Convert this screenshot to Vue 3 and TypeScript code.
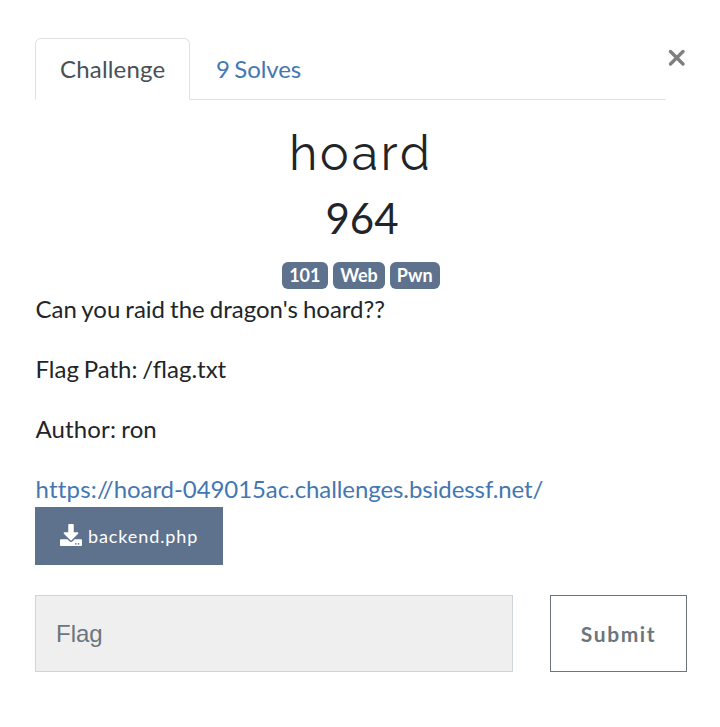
<script setup lang="ts">
import { ref } from 'vue'

const tags: string[] = ['101', 'Web', 'Pwn']
const flag = ref('')
</script>

<template>
  <main class="modal">
    <button class="close" type="button" aria-label="Close">
      <svg viewBox="0 0 18 18"><path d="M2.500 2.500L15 15M15 2.500L2.500 15" /></svg>
    </button>
    <nav class="tabs">
      <a class="tab active">Challenge</a>
      <a class="tab solves">9 Solves</a>
    </nav>
    <h2 class="name">hoard</h2>
    <h3 class="value">964</h3>
    <div class="tags"><span v-for="tag in tags" :key="tag" class="badge">{{ tag }}</span></div>
    <div class="desc">
      <p class="intro">Can you raid the dragon's hoard??</p>
      <p class="path">Flag Path: /flag.txt</p>
      <p class="author">Author: ron</p>
    </div>
    <a class="link"><span class="scheme">https://</span>hoard-049015ac.challenges.bsidessf.net/</a>
    <a class="file">
      <svg viewBox="0 0 512 512"><path d="M216 0h80c13.300 0 24 10.700 24 24v168h87.700c17.800 0 26.700 21.500 14.100 34.100L269.700 378.300c-7.500 7.500-19.800 7.500-27.300 0L90.100 226.100c-12.600-12.600-3.700-34.100 14.100-34.100H192V24c0-13.300 10.700-24 24-24zm296 376v112c0 13.300-10.700 24-24 24H24c-13.300 0-24-10.700-24-24V376c0-13.300 10.700-24 24-24h146.700l49 49c20.100 20.100 52.500 20.100 72.600 0l49-49H488c13.300 0 24 10.700 24 24zm-124 88c0-11-9-20-20-20s-20 9-20 20 9 20 20 20 20-9 20-20zm64 0c0-11-9-20-20-20s-20 9-20 20 9 20 20 20 20-9 20-20z" /></svg>
      <span>backend.php</span>
    </a>
    <form class="row" @submit.prevent>
      <input v-model="flag" class="flag" placeholder="Flag" />
      <button class="submit" type="submit">Submit</button>
    </form>
  </main>
</template>

<style>
body { background: #fff; }
</style>

<style scoped>
* { box-sizing: border-box; }
.modal { position: relative; height: 727px; padding: 38px 33px 0 35px; font: 24px/30px Lato, sans-serif; color: #212529; }
.close { position: absolute; left: 668px; top: 49px; width: 18px; height: 18px; padding: 0; border: 0; background: none; }
.close svg { display: block; width: 18px; height: 18px; fill: none; stroke: #7f7f7f; stroke-width: 3.400; stroke-linecap: round; }
.tabs { display: flex; width: 631px; height: 62px; border-bottom: 1px solid #dee2e6; }
.tab { height: 62px; padding: 15px 25px; border: 1px solid transparent; color: #4477b2; }
.active { width: 155px; padding: 15px 24px; border-color: #dee2e6 #dee2e6 #fff; border-radius: 6px 6px 0 0; color: #495057; background: #fff; letter-spacing: 0.180px; }
.solves { word-spacing: -1.500px; letter-spacing: -0.100px; }
.name { margin: 24px 0 0; height: 58px; font: 400 48px/58px Raleway, Lato, sans-serif; letter-spacing: 3px; text-align: center; }
.value { margin: 10px 0 0; padding-left: 2px; height: 52px; font-size: 42px; line-height: 52px; font-weight: 400; text-align: center; }
.tags { display: flex; justify-content: center; gap: 5px; margin-top: 18px; }
.badge { height: 27px; padding: 0 7px; border-radius: 6px; background: #5e718d; color: #fff; font-size: 18px; line-height: 27px; font-weight: 700; }
.badge:first-child { width: 46px; }
.badge:last-child { width: 50px; }
.desc { padding-top: 5px; }
.desc p { margin: 0 0 30px; padding-left: 0.500px; }
.intro { word-spacing: -1.100px; }
.path { word-spacing: -1.400px; }
.author { letter-spacing: 0.120px; word-spacing: -1px; }
.link { display: block; margin-bottom: 3px; padding-left: 0.500px; color: #4477b2; font-variant-ligatures: none; letter-spacing: -0.080px; }
.scheme { letter-spacing: 0.200px; }
.file { display: flex; align-items: center; width: 188px; height: 58px; padding-left: 25px; gap: 6px; background: #5e718d; color: #fff; font-size: 18px; letter-spacing: 0.900px; }
.file svg { width: 22px; height: 22px; margin-top: -2px; fill: currentColor; }
.row { display: flex; gap: 37px; margin: 30px 0 0; }
.flag { width: 478px; height: 77px; padding: 0 20px; border: 1px solid #ced4da; border-radius: 0; background: #efefef; font: 24px "Liberation Sans", sans-serif; outline: 0; }
.flag::placeholder { color: #6c757d; opacity: 1; }
.submit { width: 137px; height: 77px; padding: 0; border: 1px solid #6c757d; background: #fff; color: #6c757d; font: 700 21px Lato, sans-serif; letter-spacing: 1.600px; }
</style>
